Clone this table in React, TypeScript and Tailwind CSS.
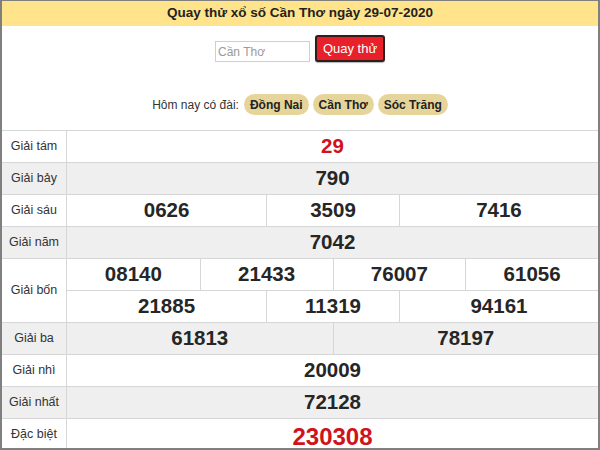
import React from "react";

type Cell = { v: string; span: string };

const FONT = { fontFamily: '"Liberation Sans", Arial, sans-serif' };

function NumRow({ cells, red, big }: { cells: Cell[]; red?: boolean; big?: boolean }) {
  return (
    <div className="grid grid-cols-8 h-full">
      {cells.map((c, i) => (
        <div
          key={i}
          className={`${c.span} flex items-center justify-center font-bold ${i > 0 ? "border-l border-[#d6d6d6]" : ""} ${
            red ? "text-[#d0121b]" : "text-[#262626]"
          } ${big ? "text-[24px]" : "text-[20.5px]"}`}
        >
          {c.v}
        </div>
      ))}
    </div>
  );
}

function Row({
  label,
  gray,
  children,
  tall,
}: {
  label: string;
  gray?: boolean;
  children: React.ReactNode;
  tall?: boolean;
}) {
  return (
    <div
      className={`flex border-t border-[#d6d6d6] shrink-0 ${tall ? "h-[64px]" : "h-[32px]"} ${
        gray ? "bg-[#efefef]" : "bg-white"
      }`}
    >
      <div className="w-[65px] shrink-0 border-r border-[#d6d6d6] flex items-center justify-center text-[12.5px] text-[#333]">
        {label}
      </div>
      <div className="flex-1 min-w-0">{children}</div>
    </div>
  );
}

export default function App() {
  return (
    <div
      style={FONT}
      className="w-[600px] h-[450px] overflow-hidden bg-white border-x-2 border-t border-b-2 border-[#7f7f7f] flex flex-col"
    >
      <div className="h-[25px] shrink-0 bg-[#ffe48c] flex items-center justify-center font-bold text-[13.5px] text-[#222]">
        Quay thử xổ số Cần Thơ ngày 29-07-2020
      </div>

      <div className="mt-[9px] flex items-end justify-center gap-[5px] shrink-0">
        <input
          placeholder="Cần Thơ"
          className="w-[95px] h-[21px] border border-[#cfcfcf] px-[2px] text-[12px] text-[#333] placeholder:text-[#9a9a9a] outline-none"
        />
        <div className="w-[70px] h-[27px] rounded-[3px] border-2 border-[#2e1e1e] bg-[#e8202a] text-white text-[13px] flex items-center justify-center shadow-[0_1px_1px_rgba(0,0,0,0.3)]">
          Quay thử
        </div>
      </div>

      <div className="mt-[32px] flex items-center justify-center gap-[4px] shrink-0 text-[12px]">
        <span className="text-[#333] mr-[1px]">Hôm nay có đài:</span>
        <span className="h-[21px] px-[6px] rounded-full bg-[#e6d59b] font-bold text-[#222] flex items-center">Đồng Nai</span>
        <span className="h-[21px] px-[6px] rounded-full bg-[#e6d59b] font-bold text-[#222] flex items-center">Cần Thơ</span>
        <span className="h-[21px] px-[6px] rounded-full bg-[#e6d59b] font-bold text-[#222] flex items-center">Sóc Trăng</span>
      </div>

      <div className="mt-[15px] flex flex-col">
        <Row label="Giải tám">
          <NumRow red cells={[{ v: "29", span: "col-span-8" }]} />
        </Row>
        <Row label="Giải bảy" gray>
          <NumRow cells={[{ v: "790", span: "col-span-8" }]} />
        </Row>
        <Row label="Giải sáu">
          <NumRow
            cells={[
              { v: "0626", span: "col-span-3" },
              { v: "3509", span: "col-span-2" },
              { v: "7416", span: "col-span-3" },
            ]}
          />
        </Row>
        <Row label="Giải năm" gray>
          <NumRow cells={[{ v: "7042", span: "col-span-8" }]} />
        </Row>
        <Row label="Giải bốn" tall>
          <div className="flex flex-col h-full">
            <div className="h-[32px]">
              <NumRow
                cells={[
                  { v: "08140", span: "col-span-2" },
                  { v: "21433", span: "col-span-2" },
                  { v: "76007", span: "col-span-2" },
                  { v: "61056", span: "col-span-2" },
                ]}
              />
            </div>
            <div className="h-[32px] border-t border-[#d6d6d6]">
              <NumRow
                cells={[
                  { v: "21885", span: "col-span-3" },
                  { v: "11319", span: "col-span-2" },
                  { v: "94161", span: "col-span-3" },
                ]}
              />
            </div>
          </div>
        </Row>
        <Row label="Giải ba" gray>
          <NumRow
            cells={[
              { v: "61813", span: "col-span-4" },
              { v: "78197", span: "col-span-4" },
            ]}
          />
        </Row>
        <Row label="Giải nhì">
          <NumRow cells={[{ v: "20009", span: "col-span-8" }]} />
        </Row>
        <Row label="Giải nhất" gray>
          <NumRow cells={[{ v: "72128", span: "col-span-8" }]} />
        </Row>
        <Row label="Đặc biệt">
          <NumRow red big cells={[{ v: "230308", span: "col-span-8" }]} />
        </Row>
      </div>
    </div>
  );
}
